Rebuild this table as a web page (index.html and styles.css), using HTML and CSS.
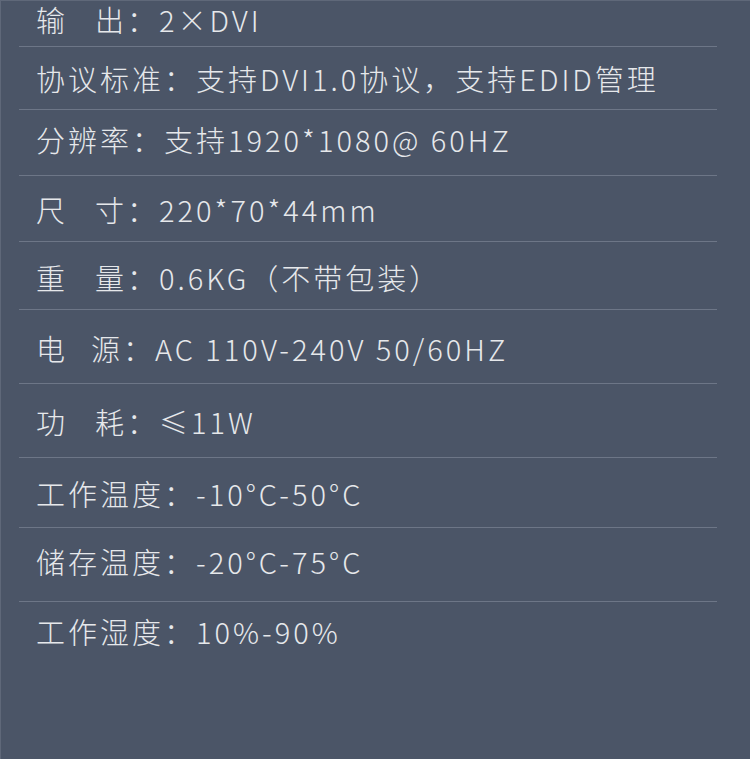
FILE: index.html
```html
<!DOCTYPE html>
<html lang="zh-CN">
<head>
    <meta charset="UTF-8">
    <meta name="viewport" content="width=device-width, initial-scale=1.0">
    <title>产品参数</title>
    <link rel="stylesheet" href="styles.css">
</head>
<body>
    <div class="spec-panel">
        <ul class="spec-list">
            <li class="spec-row spec-row--first">输<span class="spec-gap"></span>出：2×DVI</li>
            <li class="spec-row">协议标准：支持DVI1.0协议，支持EDID管理</li>
            <li class="spec-row spec-row--raise">分辨率：支持1920*1080@ 60HZ</li>
            <li class="spec-row">尺<span class="spec-gap"></span>寸：220*70*44mm</li>
            <li class="spec-row spec-row--drop">重<span class="spec-gap"></span>量：0.6KG（不带包装）</li>
            <li class="spec-row spec-row--drop">电<span class="spec-gap spec-gap--narrow"></span>源：AC 110V-240V 50/60HZ</li>
            <li class="spec-row">功<span class="spec-gap"></span>耗：≤11W</li>
            <li class="spec-row">工作温度：-10°C-50°C</li>
            <li class="spec-row spec-row--raise">储存温度：-20°C-75°C</li>
            <li class="spec-row spec-row--last">工作湿度：10%-90%</li>
        </ul>
    </div>
</body>
</html>
```

FILE: styles.css
```css
:root {
    --panel-bg: #4b5567;
    --edge: #5f6879;
    --rule: #6d7687;
    --text: #e6e8eb;
}

* {
    box-sizing: border-box;
    margin: 0;
    padding: 0;
}

body {
    font-family: "Noto Sans CJK SC Light", "Noto Sans CJK SC", "Noto Sans", sans-serif;
    font-weight: 300;
    background-color: var(--panel-bg);
    color: var(--text);
}

.spec-panel {
    height: 759px;
    border-left: 1px solid var(--edge);
    border-top: 1px solid var(--edge);
    padding-left: 18px;
    overflow: hidden;
}

.spec-list {
    list-style: none;
    width: 698px;
    height: 100%;
    display: grid;
    grid-template-rows: 46px 63px 66px 66px 68px 74px 74px 70px 74px 1fr;
}

.spec-row {
    display: flex;
    align-items: center;
    padding-left: 17px;
    font-size: 29px;
    line-height: 40px;
    letter-spacing: 3px;
    white-space: nowrap;
    border-bottom: 1px solid var(--rule);
}

/* the spaced-out two-character labels */
.spec-gap {
    display: inline-block;
    width: 27px;
}

.spec-gap--narrow {
    width: 23px;
}

/* small nudges so each line sits where it does in the original artwork */
.spec-row--raise {
    padding-bottom: 8px;
}

.spec-row--drop {
    padding-top: 2px;
}

.spec-row--first {
    align-items: flex-start;
    line-height: 36px;
}

.spec-row--last {
    align-items: flex-start;
    padding-top: 9px;
    border-bottom: none;
}
```
